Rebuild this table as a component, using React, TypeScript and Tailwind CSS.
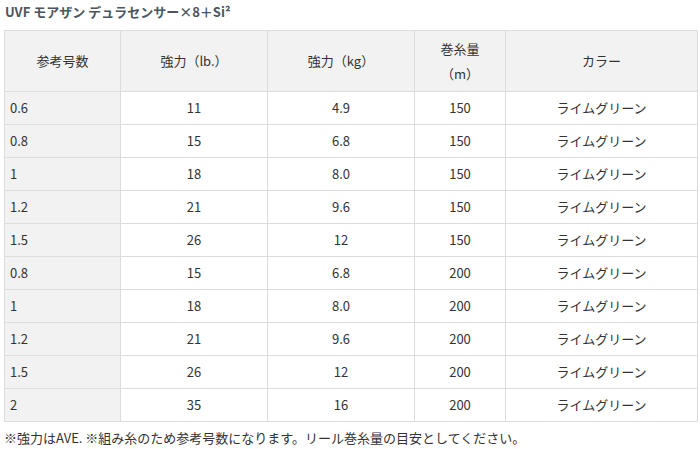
import React from 'react';

const rows = [
  ['0.6', '11', '4.9', '150'],
  ['0.8', '15', '6.8', '150'],
  ['1', '18', '8.0', '150'],
  ['1.2', '21', '9.6', '150'],
  ['1.5', '26', '12', '150'],
  ['0.8', '15', '6.8', '200'],
  ['1', '18', '8.0', '200'],
  ['1.2', '21', '9.6', '200'],
  ['1.5', '26', '12', '200'],
  ['2', '35', '16', '200'],
];

const App = () => {
  return (
    <div className="w-[700px] h-[449px] bg-white text-[#333] text-[13px] font-['Noto_Sans_CJK_JP','Noto_Sans',sans-serif] overflow-hidden">
      <h2 className="pl-[5px] pt-[1px] h-[30px] text-[13px] font-bold text-[#4b5661] leading-[22px]">
        UVF モアザン デュラセンサー×8＋Si²
      </h2>
      <table className="ml-[4px] w-[693px] border-collapse table-fixed">
        <colgroup>
          <col className="w-[116px]" />
          <col className="w-[147px]" />
          <col className="w-[147px]" />
          <col className="w-[91px]" />
          <col className="w-[192px]" />
        </colgroup>
        <thead>
          <tr className="h-[61px] bg-[#f2f2f2]">
            <th className="border border-[#dcdcdc] font-normal">参考号数</th>
            <th className="border border-[#dcdcdc] font-normal">強力（lb.）</th>
            <th className="border border-[#dcdcdc] font-normal">強力（kg）</th>
            <th className="border border-[#dcdcdc] font-normal leading-[25px]">
              巻糸量
              <br />
              （m）
            </th>
            <th className="border border-[#dcdcdc] font-normal">カラー</th>
          </tr>
        </thead>
        <tbody>
          {rows.map((r, i) => (
            <tr key={i} className="h-[33px]">
              <td className="border border-[#dcdcdc] bg-[#f2f2f2] pl-[5px]">{r[0]}</td>
              <td className="border border-[#dcdcdc] text-center">{r[1]}</td>
              <td className="border border-[#dcdcdc] text-center">{r[2]}</td>
              <td className="border border-[#dcdcdc] text-center">{r[3]}</td>
              <td className="border border-[#dcdcdc] text-center">ライムグリーン</td>
            </tr>
          ))}
        </tbody>
      </table>
      <p className="pl-[4px] pt-[6px] leading-[20px]">
        ※強力はAVE. ※組み糸のため参考号数になります。リール巻糸量の目安としてください。
      </p>
    </div>
  );
};

export default App;
